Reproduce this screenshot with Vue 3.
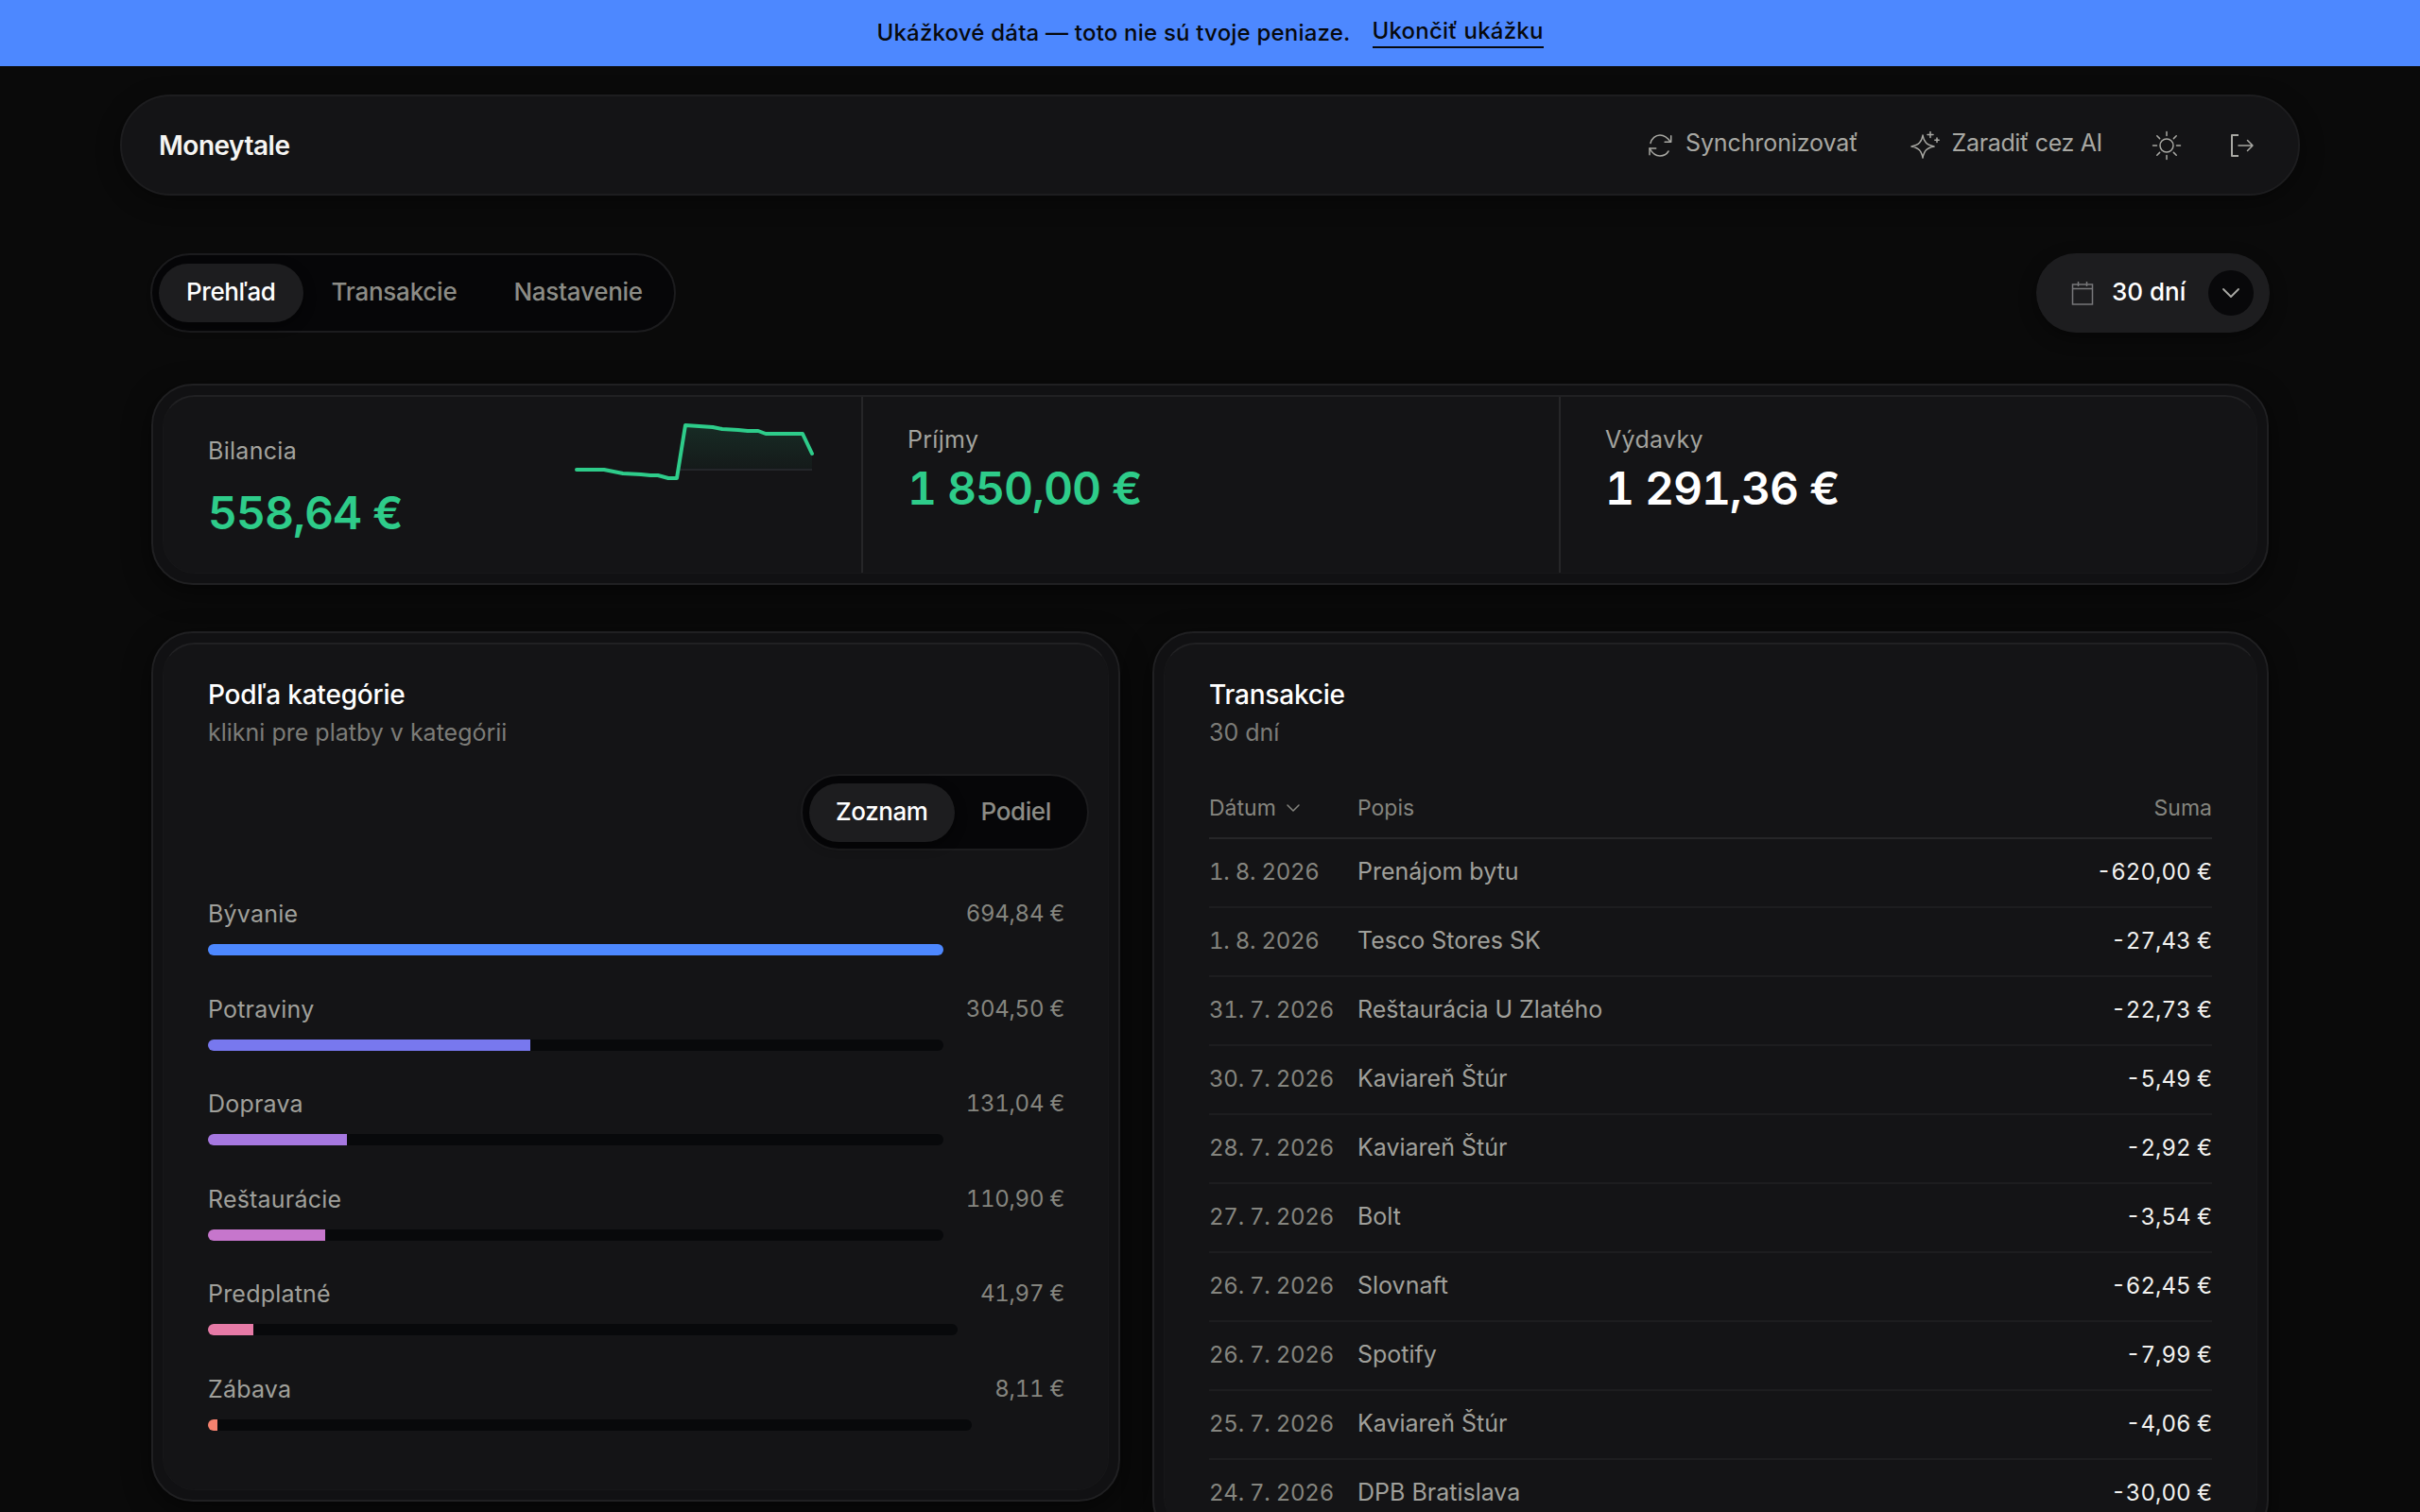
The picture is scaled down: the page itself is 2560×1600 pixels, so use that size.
<script setup>
const tabs = ['Prehľad', 'Transakcie', 'Nastavenie']

const categories = [
  { name: 'Bývanie', amount: '694,84 €', width: 100, color: '#4d88ff' },
  { name: 'Potraviny', amount: '304,50 €', width: 43.8, color: '#7878ee' },
  { name: 'Doprava', amount: '131,04 €', width: 18.9, color: '#a678e0' },
  { name: 'Reštaurácie', amount: '110,90 €', width: 16, color: '#c676cc' },
  { name: 'Predplatné', amount: '41,97 €', width: 6, color: '#e67aa6' },
  { name: 'Zábava', amount: '8,11 €', width: 1.2, color: '#f5826f' },
]

const transactions = [
  { date: '1. 8. 2026', text: 'Prenájom bytu', amount: '-620,00 €' },
  { date: '1. 8. 2026', text: 'Tesco Stores SK', amount: '-27,43 €' },
  { date: '31. 7. 2026', text: 'Reštaurácia U Zlatého', amount: '-22,73 €' },
  { date: '30. 7. 2026', text: 'Kaviareň Štúr', amount: '-5,49 €' },
  { date: '28. 7. 2026', text: 'Kaviareň Štúr', amount: '-2,92 €' },
  { date: '27. 7. 2026', text: 'Bolt', amount: '-3,54 €' },
  { date: '26. 7. 2026', text: 'Slovnaft', amount: '-62,45 €' },
  { date: '26. 7. 2026', text: 'Spotify', amount: '-7,99 €' },
  { date: '25. 7. 2026', text: 'Kaviareň Štúr', amount: '-4,06 €' },
  { date: '24. 7. 2026', text: 'DPB Bratislava', amount: '-30,00 €' },
]

// sparkline points, x/y already in svg units
const spark = [
  [6, 53], [35, 53], [45, 55], [55, 57], [74, 58], [84, 59], [92, 59], [103, 62],
  [112, 62], [121, 6], [150, 8], [160, 10], [177, 11], [187, 12], [198, 12], [206, 15],
  [245, 15], [255, 36],
]
const sparkLine = spark.map((p) => p.join(',')).join(' ')
const sparkArea = `112,53 ${spark.slice(9).map((p) => p.join(',')).join(' ')} 255,53`
</script>

<template>
  <div class="page">
    <div class="banner">
      <span>Ukážkové dáta — toto nie sú tvoje peniaze.</span>
      <a class="banner-link">Ukončiť ukážku</a>
    </div>

    <header class="nav">
      <div class="brand">Moneytale</div>
      <div class="nav-actions">
        <button class="nav-btn sync">
          <svg width="26" height="26" viewBox="0 0 26 26" fill="none" stroke="currentColor" stroke-width="1.5" stroke-linecap="round" stroke-linejoin="round">
            <path d="M3 10.5C4.2 5.5 8.3 2 13 2c4.6 0 8 2.400 11 7.300" />
            <path d="M24.700 2.700v6.600h-6.600" />
            <path d="M22 19c-1.800 3-5 5-9 5-4.600 0-8.300-3-10.900-8" />
            <path d="M2 22.700V16h6.700" />
          </svg>
          <span class="nav-label">Synchronizovať</span>
        </button>
        <button class="nav-btn ai">
          <svg width="32" height="30" viewBox="0 0 32 30" fill="none" stroke="currentColor" stroke-width="1.5" stroke-linecap="round" stroke-linejoin="round">
            <path d="M13 4C14 11 17 14.500 25 16 17 17.500 14.500 20.500 13 28 11.500 20.500 9 17.500 1 16 9 14.500 12 11 13 4z" />
            <path d="M21 0.500v6M18 3.500h6M28 7v4.500M25.800 9.200h4.400" />
          </svg>
          <span class="nav-label">Zaradiť cez AI</span>
        </button>
        <button class="nav-icon">
          <svg width="32" height="32" viewBox="0 0 32 32" fill="none" stroke="currentColor" stroke-width="1.5" stroke-linecap="round">
            <circle cx="16" cy="16" r="7" />
            <path d="M16 1.500v4M16 26.500v4M1.500 16h4M26.500 16h4M5.800 5.800l2.800 2.800M23.400 23.400l2.800 2.800M5.800 26.200l2.800-2.800M23.400 8.600l2.800-2.800" />
          </svg>
        </button>
        <button class="nav-icon logout">
          <svg width="28" height="26" viewBox="0 0 28 26" fill="none" stroke="currentColor" stroke-width="1.5" stroke-linejoin="round">
            <path d="M10 2H3v22h7" stroke-width="2" />
            <path d="M10 13h15M19.500 7.500 25 13l-5.500 5.500" stroke-linecap="round" />
          </svg>
        </button>
      </div>
    </header>

    <main class="content">
      <div class="toolbar">
        <nav class="pills tabs">
          <button v-for="(tab, i) in tabs" :key="tab" class="pill" :class="{ active: i === 0 }">{{ tab }}</button>
        </nav>
        <button class="range">
          <svg class="cal" width="24" height="26" viewBox="0 0 24 26" fill="none" stroke="currentColor" stroke-width="1.5">
            <path d="M1.500 4h21v21h-21zM1.500 8.500h21M7.500 1v5M16.500 1v5" />
          </svg>
          <span class="range-label">30 dní</span>
          <span class="range-arrow">
            <svg width="20" height="12" viewBox="0 0 20 12" fill="none" stroke="currentColor" stroke-width="1.800" stroke-linecap="round" stroke-linejoin="round">
              <path d="M2 2l8 8 8-8" />
            </svg>
          </span>
        </button>
      </div>

      <section class="shell stats-shell">
        <div class="inner stats">
          <div class="stat stat-main">
            <div class="stat-text">
              <div class="stat-label">Bilancia</div>
              <div class="stat-value green">558,64 €</div>
            </div>
            <svg class="spark" width="260" height="80" viewBox="0 0 260 80">
              <defs>
                <linearGradient id="sparkFill" x1="0" y1="0" x2="0" y2="1">
                  <stop offset="0" stop-color="#2ecc8a" stop-opacity="0.13" />
                  <stop offset="1" stop-color="#2ecc8a" stop-opacity="0.03" />
                </linearGradient>
              </defs>
              <polygon :points="sparkArea" fill="url(#sparkFill)" />
              <line x1="112" y1="53" x2="255" y2="53" stroke="#24262a" stroke-width="2" />
              <polyline :points="sparkLine" fill="none" stroke="#2ecc8a" stroke-width="4" stroke-linecap="round" stroke-linejoin="round" />
            </svg>
          </div>
          <div class="stat">
            <div class="stat-label">Príjmy</div>
            <div class="stat-value green">1 850,00 €</div>
          </div>
          <div class="stat">
            <div class="stat-label">Výdavky</div>
            <div class="stat-value">1 291,36 €</div>
          </div>
        </div>
      </section>

      <div class="columns">
        <section class="shell">
          <div class="inner panel categories">
            <h2 class="panel-title">Podľa kategórie</h2>
            <p class="panel-sub">klikni pre platby v kategórii</p>
            <div class="toggle-row">
              <div class="pills toggle">
                <button class="pill active">Zoznam</button>
                <button class="pill">Podiel</button>
              </div>
            </div>
            <div class="cat-list">
              <div v-for="cat in categories" :key="cat.name" class="cat">
                <div class="cat-main">
                  <div class="cat-name">{{ cat.name }}</div>
                  <div class="track">
                    <div class="fill" :style="{ width: cat.width + '%', background: cat.color }"></div>
                  </div>
                </div>
                <div class="cat-amount">{{ cat.amount }}</div>
              </div>
            </div>
          </div>
        </section>

        <section class="shell">
          <div class="inner panel">
            <h2 class="panel-title">Transakcie</h2>
            <p class="panel-sub">30 dní</p>
            <div class="tx-head tx-row">
              <span class="tx-sort">
                Dátum
                <svg width="16" height="10" viewBox="0 0 16 10" fill="none" stroke="currentColor" stroke-width="1.500" stroke-linecap="round" stroke-linejoin="round">
                  <path d="M2 2l6 6 6-6" />
                </svg>
              </span>
              <span>Popis</span>
              <span class="tx-right">Suma</span>
            </div>
            <div v-for="(tx, i) in transactions" :key="i" class="tx-row tx-item">
              <span class="tx-date">{{ tx.date }}</span>
              <span class="tx-text">{{ tx.text }}</span>
              <span class="tx-right tx-amount">{{ tx.amount }}</span>
            </div>
          </div>
        </section>
      </div>
    </main>
  </div>
</template>

<style scoped>
.page {
  height: 1600px;
  overflow: hidden;
  font-family: Inter, "Liberation Sans", sans-serif;
  color: #f5f5f3;
  background: #0a0a0a;
}

button {
  font: inherit;
  color: inherit;
  background: none;
  border: 0;
  padding: 0;
}

.banner {
  height: 70px;
  box-sizing: border-box;
  padding-bottom: 2px;
  display: flex;
  align-items: center;
  justify-content: center;
  gap: 23px;
  background: #4d88ff;
  color: #07090d;
  font-size: 24px;
  font-weight: 500;
  letter-spacing: 0.2px;
}

.banner-link {
  border-bottom: 2px solid #07090d;
  padding-bottom: 2px;
}

.nav {
  height: 107px;
  margin: 30px 127px 0;
  padding: 0 45px 0 39px;
  box-sizing: border-box;
  display: flex;
  align-items: center;
  justify-content: space-between;
  background: #141416;
  border: 2px solid #1d1d1f;
  border-radius: 54px;
  box-shadow: 0 6px 24px rgb(0 0 0 / 40%);
}

.brand {
  font-size: 28px;
  font-weight: 600;
  letter-spacing: -0.5px;
}

.nav-actions {
  display: flex;
  align-items: center;
  color: #a8a8a3;
}

.nav-btn {
  display: flex;
  align-items: center;
  font-size: 25px;
  font-weight: 400;
}

.nav-label {
  padding-bottom: 5px;
}

.sync {
  gap: 14px;
  letter-spacing: -0.1px;
}

.ai {
  margin-left: 55px;
  gap: 12px;
  letter-spacing: -0.35px;
}

.nav-icon {
  display: flex;
  margin-left: 52px;
}

.logout {
  margin-left: 50px;
}

.content {
  margin: 0 160px;
}

.toolbar {
  display: flex;
  align-items: center;
  justify-content: space-between;
  margin-top: 61px;
}

.pills {
  display: inline-flex;
  align-items: center;
  box-sizing: border-box;
  background: #060608;
  border: 2px solid #1c1c1e;
  border-radius: 42px;
  padding: 7px;
}

.tabs {
  height: 84px;
  width: 556px;
  margin-left: -1px;
}

.pill {
  height: 62px;
  padding: 0 29px 3px;
  border-radius: 31px;
  font-size: 26px;
  font-weight: 500;
  letter-spacing: -0.4px;
  color: #8c8c86;
  white-space: nowrap;
}

.tabs .pill:not(.active) {
  padding: 0 30px 3px;
  letter-spacing: -0.25px;
}

.pill.active {
  background: #1d1d1f;
  color: #fff;
  box-shadow: 0 4px 12px rgb(0 0 0 / 50%);
}

.range {
  width: 247px;
  height: 84px;
  margin-right: -1px;
  display: flex;
  align-items: center;
  box-sizing: border-box;
  padding: 0 17px 0 37px;
  background: #1d1d1f;
  border-radius: 42px;
  font-size: 26px;
  font-weight: 500;
  color: #fff;
  box-shadow: 0 6px 18px rgb(0 0 0 / 40%);
}

.range-label {
  padding-bottom: 3px;
}

.cal {
  color: #77777a;
  margin-right: 19px;
}

.range-arrow {
  width: 48px;
  height: 48px;
  margin-left: auto;
  display: flex;
  align-items: center;
  justify-content: center;
  border-radius: 50%;
  background: #08080a;
  color: #aaaaa6;
}

.shell {
  box-sizing: border-box;
  padding: 10px;
  background: #111113;
  border: 2px solid #202022;
  border-radius: 44px;
  box-shadow: 0 8px 28px rgb(0 0 0 / 50%);
}

.inner {
  box-sizing: border-box;
  background: #141416;
  border: 1px solid #171719;
  border-top: 2px solid #212123;
  border-radius: 34px;
}

.stats-shell {
  height: 213px;
  margin-top: 54px;
}

.stats {
  height: 100%;
  display: grid;
  grid-template-columns: repeat(3, 1fr);
}

.stat {
  padding: 30px 48px 0 47px;
  border-left: 2px solid #262628;
}

.stat:first-child {
  border-left: 0;
}

.stat-main {
  display: flex;
  justify-content: space-between;
  padding-top: 24px;
}

.stat-main .stat-text {
  padding-top: 18px;
}

.stat-main .stat-value {
  margin-top: 22px;
}

.stat-label {
  font-size: 25px;
  line-height: 30px;
  letter-spacing: 0.3px;
  color: #a3a39e;
}

.stat-value {
  margin-top: 8px;
  font-size: 48px;
  line-height: 58px;
  font-weight: 600;
  letter-spacing: -1px;
  font-variant-numeric: tabular-nums;
  color: #fff;
  white-space: nowrap;
}

.green {
  color: #2ecc8a;
}

.spark {
  flex: none;
  margin-right: -1px;
}

.columns {
  display: grid;
  grid-template-columns: 1025px 1181px;
  gap: 34px;
  align-items: start;
  margin-top: 49px;
}

.panel {
  padding: 35px 47px 0;
}

.categories {
  height: 897px;
  padding-right: 46px;
}

.panel-title {
  margin: 0;
  font-size: 28px;
  line-height: 36px;
  font-weight: 500;
  letter-spacing: -0.2px;
  color: #fff;
}

.panel-sub {
  margin: 5px 0 0;
  font-size: 25px;
  line-height: 34px;
  color: #7c7c78;
}

.toggle-row {
  display: flex;
  justify-content: flex-end;
  margin: 27px -26px 0 0;
}

.toggle {
  height: 81px;
  width: 305px;
  padding: 0 7px;
  background: #060608;
}

.toggle .pill {
  padding: 0 28px 3px;
}

.cat-list {
  margin-top: 50px;
}

.cat {
  height: 100.6px;
  display: flex;
  gap: 24px;
}

.cat-main {
  flex: 1;
}

.cat-name,
.cat-amount {
  font-size: 25px;
  line-height: 34px;
  color: #a0a09b;
}

.cat-name {
  letter-spacing: 0.2px;
}

.cat-amount {
  font-size: 24px;
  letter-spacing: -0.3px;
  font-variant-numeric: tabular-nums;
  color: #85857f;
}

.track {
  height: 12px;
  margin-top: 15px;
  overflow: hidden;
  border-radius: 6px;
  background: #08090b;
}

.fill {
  height: 100%;
}

.tx-row {
  display: grid;
  grid-template-columns: 157px 1fr auto;
  align-items: center;
}

.tx-head {
  height: 71px;
  margin-top: 25px;
  padding-top: 6px;
  box-sizing: border-box;
  font-size: 23px;
  color: #85857f;
  border-bottom: 2px solid #262628;
}

.tx-sort {
  display: flex;
  align-items: center;
  gap: 10px;
}

.tx-item {
  height: 73px;
  padding-bottom: 3px;
  box-sizing: border-box;
  border-bottom: 2px solid #1d1d1f;
  font-size: 25px;
}

.tx-date {
  font-size: 24px;
  letter-spacing: -0.25px;
  color: #85857f;
  font-variant-numeric: tabular-nums;
}

.tx-text {
  color: #a0a09b;
}

.tx-right {
  text-align: right;
}

.tx-amount {
  font-size: 24px;
  color: #f2f2f0;
  font-variant-numeric: tabular-nums;
}
</style>

<style>
body {
  margin: 0;
  background: #0a0a0a;
}
</style>
